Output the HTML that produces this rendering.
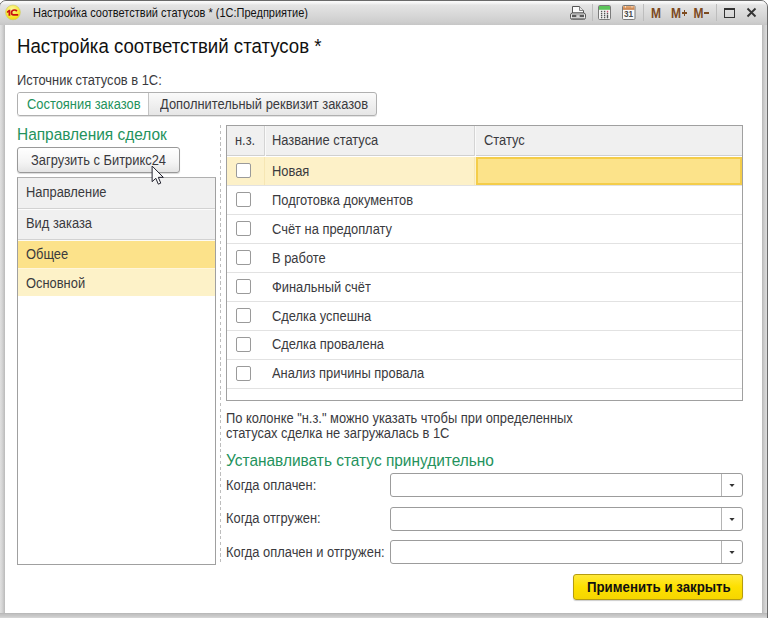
<!DOCTYPE html>
<html><head><meta charset="utf-8">
<style>
*{margin:0;padding:0;box-sizing:border-box}
html,body{width:768px;height:618px;overflow:hidden;background:#fff}
body{background:#fff;font-family:"Liberation Sans",sans-serif;color:#3a3a3e;position:relative}
.a{position:absolute;white-space:nowrap}
</style></head><body>
<div class="a" style="left:-1px;top:0px;width:769px;height:625px;border:1px solid #6a6a6a;border-radius:7px 7px 0 0;background:#d0d0d0;overflow:hidden;"></div>
<div class="a" style="left:0px;top:1px;width:767px;height:24px;background:linear-gradient(#fbfbfb 0,#f5f5f5 2px,#e4e4e4 4px,#dadada 12px,#cecece 21px,#c6c6c6 24px);border-radius:6px 6px 0 0;"></div>
<div class="a" style="left:0px;top:25px;width:5px;height:593px;background:linear-gradient(90deg,#e0e0e0 0,#d6d6d6 2px,#c8c8c8 3.5px,#bababa 5px);"></div>
<div class="a" style="left:762px;top:25px;width:5px;height:593px;background:linear-gradient(90deg,#b8b8b8 0,#c6c6c6 1.5px,#d2d2d2 3px,#dcdcdc 5px);"></div>
<div class="a" style="left:0px;top:613px;width:767px;height:5px;background:linear-gradient(#b5b5b5 0,#c2c2c2 1.5px,#c8c8c8 3px,#d8d8d8 5px);"></div>
<div class="a" style="left:5px;top:25px;width:757px;height:588px;background:#fff;"></div>
<svg class="a" style="left:3px;top:2px" width="22" height="22" viewBox="0 0 22 22">
  <defs><radialGradient id="g1" cx="0.45" cy="0.3" r="0.75"><stop offset="0" stop-color="#fbf8a8"/><stop offset="0.55" stop-color="#f8ea40"/><stop offset="1" stop-color="#f2d800"/></radialGradient></defs>
  <circle cx="9.95" cy="10.4" r="7.4" fill="url(#g1)" stroke="#c8c870" stroke-width="0.6"/>
  <path d="M3.9 9.4 L6.0 7.8 H7.3 V13.7 H5.5 V10.3 L3.9 11 Z" fill="#c81010"/>
  <path d="M13.9 9.1 C13.2 8.3 12.4 8.0 11.4 8.0 C9.5 8.0 8.5 9.3 8.5 10.8 C8.5 12.3 9.5 12.9 10.6 12.9 H15.2" fill="none" stroke="#c81010" stroke-width="1.7"/>
</svg>
<div class="a" style="left:33px;top:7px;font-size:11px;line-height:11px;transform:scaleY(1.08);transform-origin:0 0;color:#111;">Настройка соответствий статусов * (1С:Предприятие)</div>
<svg class="a" style="left:568px;top:4px" width="20" height="17" viewBox="0 0 20 17">
  <path d="M4.5 2.5 H11.5 L15.5 6.5 V9 H4.5 Z" fill="#fbfbfb" stroke="#555" stroke-width="1"/>
  <path d="M11.5 2.5 V6.5 H15.5" fill="#e4e4e4" stroke="#666" stroke-width="0.8"/>
  <rect x="2.5" y="9" width="15" height="6.5" rx="2" fill="#ececec" stroke="#555" stroke-width="1"/>
  <rect x="4" y="10.6" width="12" height="2.6" fill="#5a5a5a"/>
  <rect x="8.3" y="11.3" width="3.4" height="1.5" fill="#f4f4f4"/>
  <rect x="3.5" y="14" width="13" height="1.6" fill="#8a8a8a"/>
</svg>
<div class="a" style="left:592px;top:4px;width:1px;height:17px;background:#bdbdbd;"></div>
<svg class="a" style="left:597px;top:5px" width="15" height="15" viewBox="0 0 15 15">
  <rect x="1.5" y="0.5" width="12" height="14" rx="1.2" fill="#f6f6f6" stroke="#7a7a7a"/>
  <rect x="2" y="1" width="11" height="3.8" fill="#5cc45a"/>
  <g fill="#555">
    <rect x="3.9" y="5.8" width="1.4" height="1.4"/><rect x="6.9" y="5.8" width="1.4" height="1.4"/><rect x="9.8" y="5.8" width="1.4" height="1.6" fill="#d05070"/>
    <rect x="3.9" y="7.9" width="1.4" height="1.4"/><rect x="6.9" y="7.9" width="1.4" height="1.4"/><rect x="9.8" y="7.9" width="1.4" height="1.4"/>
    <rect x="3.9" y="9.9" width="1.4" height="1.4"/><rect x="6.9" y="9.9" width="1.4" height="1.4"/><rect x="9.8" y="9.9" width="1.4" height="3.4"/>
    <rect x="3.9" y="11.9" width="1.4" height="1.4"/><rect x="6.9" y="11.9" width="1.4" height="1.4"/>
  </g>
</svg>
<svg class="a" style="left:621px;top:5px" width="15" height="15" viewBox="0 0 15 15">
  <defs><linearGradient id="cg" x1="0" y1="0" x2="0" y2="1"><stop offset="0" stop-color="#e9ae78"/><stop offset="1" stop-color="#c47a45"/></linearGradient></defs>
  <rect x="1.5" y="0.5" width="12.5" height="14" rx="1.2" fill="#fafafa" stroke="#7a7a7a"/>
  <rect x="2" y="1" width="11.5" height="3.8" fill="url(#cg)"/>
  <rect x="4" y="1" width="1" height="1.6" fill="#f4e0d0"/><rect x="10.5" y="1" width="1" height="1.6" fill="#f4e0d0"/>
  <text x="7.6" y="12.2" text-anchor="middle" font-family="Liberation Sans" font-weight="bold" font-size="8.2" fill="#4a4a4a">31</text>
</svg>
<div class="a" style="left:643px;top:4px;width:1px;height:17px;background:#bdbdbd;"></div>
<div class="a" style="left:651px;top:6px;font-size:12px;line-height:12px;transform:scaleY(1.15);transform-origin:0 0;color:#7d4a1e;font-weight:bold;">M</div>
<div class="a" style="left:671px;top:6px;font-size:12px;line-height:12px;transform:scaleY(1.15);transform-origin:0 0;color:#7d4a1e;font-weight:bold;">M</div>
<div class="a" style="left:681.8px;top:12px;width:5.5px;height:1.6px;background:#7d4a1e;"></div>
<div class="a" style="left:683.8px;top:10px;width:1.6px;height:5.5px;background:#7d4a1e;"></div>
<div class="a" style="left:693.5px;top:6px;font-size:12px;line-height:12px;transform:scaleY(1.15);transform-origin:0 0;color:#7d4a1e;font-weight:bold;">M</div>
<div class="a" style="left:704.3px;top:12px;width:5px;height:1.7px;background:#7d4a1e;"></div>
<div class="a" style="left:716px;top:4px;width:1px;height:17px;background:#bdbdbd;"></div>
<div class="a" style="left:724px;top:8px;width:11px;height:10px;border:1.5px solid #333;border-top-width:2px;"></div>
<svg class="a" style="left:746px;top:7px" width="11" height="11" viewBox="0 0 11 11">
  <path d="M1.5 1.5 L9.5 9.5 M9.5 1.5 L1.5 9.5" stroke="#333" stroke-width="1.8"/>
</svg>
<div class="a" style="left:17px;top:37px;font-size:18.65px;line-height:18.65px;transform:scaleY(1.065);transform-origin:0 0;color:#111;">Настройка соответствий статусов *</div>
<div class="a" style="left:17px;top:74px;font-size:12.9px;line-height:12.9px;transform:scaleY(1.07);transform-origin:0 0;">Источник статусов в 1С:</div>
<div class="a" style="left:17px;top:92px;width:360px;height:24px;border:1px solid #b0b0b0;border-radius:3px;background:linear-gradient(#fafafa,#e6e6e6);box-shadow:0 1px 0 #e4e4e4;"></div>
<div class="a" style="left:18px;top:93px;width:130px;height:22px;background:#fff;border-radius:2px 0 0 2px;"></div>
<div class="a" style="left:148px;top:93px;width:1px;height:22px;background:#c4c4c4;"></div>
<div class="a" style="left:27px;top:98px;font-size:12.9px;line-height:12.9px;transform:scaleY(1.07);transform-origin:0 0;color:#23925c;">Состояния заказов</div>
<div class="a" style="left:160px;top:98px;font-size:12.9px;line-height:12.9px;transform:scaleY(1.07);transform-origin:0 0;">Дополнительный реквизит заказов</div>
<div class="a" style="left:17px;top:126px;font-size:15.45px;line-height:15.45px;transform:scaleY(1.09);transform-origin:0 0;color:#23925c;">Направления сделок</div>
<div class="a" style="left:17px;top:147px;width:163px;height:26px;border:1px solid #999;border-radius:3px;background:linear-gradient(#ffffff,#f4f4f4 60%,#e4e4e4);box-shadow:0 1px 1px rgba(0,0,0,0.15);"></div>
<div class="a" style="left:31px;top:154px;font-size:12.9px;line-height:12.9px;transform:scaleY(1.07);transform-origin:0 0;">Загрузить с Битрикс24</div>
<div class="a" style="left:17px;top:177px;width:199px;height:388px;border:1px solid #a0a0a0;border-top-color:#b0b0b0;background:#fff;"></div>
<div class="a" style="left:18px;top:178px;width:197px;height:30px;background:#f0f0f0;"></div>
<div class="a" style="left:18px;top:208px;width:197px;height:1px;background:#d2d2d2;"></div>
<div class="a" style="left:18px;top:209px;width:197px;height:1px;background:#fcfcfc;"></div>
<div class="a" style="left:18px;top:210px;width:197px;height:29px;background:#f0f0f0;"></div>
<div class="a" style="left:18px;top:239px;width:197px;height:1px;background:#d2d2d2;"></div>
<div class="a" style="left:18px;top:240px;width:197px;height:1px;background:#fdfbf4;"></div>
<div class="a" style="left:18px;top:241px;width:197px;height:27px;background:#fce28a;"></div>
<div class="a" style="left:18px;top:268px;width:197px;height:1px;background:#fff6dc;"></div>
<div class="a" style="left:18px;top:269px;width:197px;height:27px;background:#fdf2c8;"></div>
<div class="a" style="left:26px;top:186px;font-size:12.9px;line-height:12.9px;transform:scaleY(1.07);transform-origin:0 0;">Направление</div>
<div class="a" style="left:26px;top:217px;font-size:12.9px;line-height:12.9px;transform:scaleY(1.07);transform-origin:0 0;">Вид заказа</div>
<div class="a" style="left:26px;top:248px;font-size:12.9px;line-height:12.9px;transform:scaleY(1.07);transform-origin:0 0;">Общее</div>
<div class="a" style="left:26px;top:277px;font-size:12.9px;line-height:12.9px;transform:scaleY(1.07);transform-origin:0 0;">Основной</div>
<div class="a" style="left:220px;top:125px;width:1px;height:439px;background:repeating-linear-gradient(#bdbdbd 0 3.2px,transparent 3.2px 5.79px);"></div>
<div class="a" style="left:226px;top:125px;width:517px;height:276px;border:1px solid #a0a0a0;background:#fff;"></div>
<div class="a" style="left:227px;top:126px;width:515px;height:30px;background:#f0f0f0;border-bottom:1px solid #d0d0d0;"></div>
<div class="a" style="left:264px;top:126px;width:1px;height:30px;background:#d4d4d4;"></div>
<div class="a" style="left:265px;top:126px;width:1px;height:30px;background:#fafafa;"></div>
<div class="a" style="left:474px;top:126px;width:1px;height:30px;background:#d4d4d4;"></div>
<div class="a" style="left:475px;top:126px;width:1px;height:30px;background:#fafafa;"></div>
<div class="a" style="left:235px;top:134px;font-size:12.9px;line-height:12.9px;transform:scaleY(1.07);transform-origin:0 0;">н.з.</div>
<div class="a" style="left:272px;top:134px;font-size:12.9px;line-height:12.9px;transform:scaleY(1.07);transform-origin:0 0;">Название статуса</div>
<div class="a" style="left:484px;top:134px;font-size:12.9px;line-height:12.9px;transform:scaleY(1.07);transform-origin:0 0;">Статус</div>
<div class="a" style="left:227px;top:157px;width:250px;height:28px;background:#fdf1c8;"></div>
<div class="a" style="left:264px;top:157px;width:1px;height:28px;background:#f6e6b4;"></div>
<div class="a" style="left:474px;top:157px;width:1px;height:28px;background:#f6e6b4;"></div>
<div class="a" style="left:476px;top:157px;width:266px;height:28px;background:#fce38a;border:2px solid #f4cd4a;"></div>
<div class="a" style="left:227px;top:185px;width:515px;height:1px;background:#e2e2e2;"></div>
<div class="a" style="left:236px;top:163px;width:15px;height:15px;border:1px solid #9a9a9a;border-radius:2px;background:#fff;"></div>
<div class="a" style="left:272px;top:165px;font-size:12.9px;line-height:12.9px;transform:scaleY(1.07);transform-origin:0 0;">Новая</div>
<div class="a" style="left:227px;top:214px;width:515px;height:1px;background:#e2e2e2;"></div>
<div class="a" style="left:236px;top:192px;width:15px;height:15px;border:1px solid #9a9a9a;border-radius:2px;background:#fff;"></div>
<div class="a" style="left:272px;top:194px;font-size:12.9px;line-height:12.9px;transform:scaleY(1.07);transform-origin:0 0;">Подготовка документов</div>
<div class="a" style="left:227px;top:243px;width:515px;height:1px;background:#e2e2e2;"></div>
<div class="a" style="left:236px;top:221px;width:15px;height:15px;border:1px solid #9a9a9a;border-radius:2px;background:#fff;"></div>
<div class="a" style="left:272px;top:223px;font-size:12.9px;line-height:12.9px;transform:scaleY(1.07);transform-origin:0 0;">Счёт на предоплату</div>
<div class="a" style="left:227px;top:272px;width:515px;height:1px;background:#e2e2e2;"></div>
<div class="a" style="left:236px;top:250px;width:15px;height:15px;border:1px solid #9a9a9a;border-radius:2px;background:#fff;"></div>
<div class="a" style="left:272px;top:252px;font-size:12.9px;line-height:12.9px;transform:scaleY(1.07);transform-origin:0 0;">В работе</div>
<div class="a" style="left:227px;top:301px;width:515px;height:1px;background:#e2e2e2;"></div>
<div class="a" style="left:236px;top:279px;width:15px;height:15px;border:1px solid #9a9a9a;border-radius:2px;background:#fff;"></div>
<div class="a" style="left:272px;top:281px;font-size:12.9px;line-height:12.9px;transform:scaleY(1.07);transform-origin:0 0;">Финальный счёт</div>
<div class="a" style="left:227px;top:330px;width:515px;height:1px;background:#e2e2e2;"></div>
<div class="a" style="left:236px;top:308px;width:15px;height:15px;border:1px solid #9a9a9a;border-radius:2px;background:#fff;"></div>
<div class="a" style="left:272px;top:310px;font-size:12.9px;line-height:12.9px;transform:scaleY(1.07);transform-origin:0 0;">Сделка успешна</div>
<div class="a" style="left:227px;top:359px;width:515px;height:1px;background:#e2e2e2;"></div>
<div class="a" style="left:236px;top:337px;width:15px;height:15px;border:1px solid #9a9a9a;border-radius:2px;background:#fff;"></div>
<div class="a" style="left:272px;top:338px;font-size:12.9px;line-height:12.9px;transform:scaleY(1.07);transform-origin:0 0;">Сделка провалена</div>
<div class="a" style="left:227px;top:388px;width:515px;height:1px;background:#e2e2e2;"></div>
<div class="a" style="left:236px;top:366px;width:15px;height:15px;border:1px solid #9a9a9a;border-radius:2px;background:#fff;"></div>
<div class="a" style="left:272px;top:367px;font-size:12.9px;line-height:12.9px;transform:scaleY(1.07);transform-origin:0 0;">Анализ причины провала</div>
<div class="a" style="left:226px;top:412px;font-size:12.9px;line-height:12.9px;transform:scaleY(1.07);transform-origin:0 0;">По колонке "н.з." можно указать чтобы при определенных</div>
<div class="a" style="left:226px;top:427px;font-size:12.9px;line-height:12.9px;transform:scaleY(1.07);transform-origin:0 0;">статусах сделка не загружалась в 1С</div>
<div class="a" style="left:226px;top:452px;font-size:15.45px;line-height:15.45px;transform:scaleY(1.09);transform-origin:0 0;color:#23925c;">Устанавливать статус принудительно</div>
<div class="a" style="left:226px;top:479px;font-size:12.9px;line-height:12.9px;transform:scaleY(1.07);transform-origin:0 0;">Когда оплачен:</div>
<div class="a" style="left:390px;top:473px;width:353px;height:24px;border:1px solid #9c9c9c;border-radius:3px;background:#fff;"></div>
<div class="a" style="left:721px;top:474px;width:1px;height:22px;background:#b4b4b4;"></div>
<svg class="a" style="left:729px;top:483px" width="6" height="5" viewBox="0 0 6 5"><path d="M0.4 1 H5.6 L3 3.9 Z" fill="#333"/></svg>
<div class="a" style="left:226px;top:512px;font-size:12.9px;line-height:12.9px;transform:scaleY(1.07);transform-origin:0 0;">Когда отгружен:</div>
<div class="a" style="left:390px;top:507px;width:353px;height:24px;border:1px solid #9c9c9c;border-radius:3px;background:#fff;"></div>
<div class="a" style="left:721px;top:508px;width:1px;height:22px;background:#b4b4b4;"></div>
<svg class="a" style="left:729px;top:517px" width="6" height="5" viewBox="0 0 6 5"><path d="M0.4 1 H5.6 L3 3.9 Z" fill="#333"/></svg>
<div class="a" style="left:226px;top:546px;font-size:12.9px;line-height:12.9px;transform:scaleY(1.07);transform-origin:0 0;">Когда оплачен и отгружен:</div>
<div class="a" style="left:390px;top:540px;width:353px;height:24px;border:1px solid #9c9c9c;border-radius:3px;background:#fff;"></div>
<div class="a" style="left:721px;top:541px;width:1px;height:22px;background:#b4b4b4;"></div>
<svg class="a" style="left:729px;top:550px" width="6" height="5" viewBox="0 0 6 5"><path d="M0.4 1 H5.6 L3 3.9 Z" fill="#333"/></svg>
<div class="a" style="left:573px;top:574px;width:170px;height:26px;border:1px solid #b59c10;border-radius:3px;background:linear-gradient(#ffe93a,#fde000 50%,#f6d600);box-shadow:0 1px 1px rgba(0,0,0,0.2);"></div>
<div class="a" style="left:587px;top:580px;font-size:13.25px;line-height:13.25px;transform:scaleY(1.1);transform-origin:0 0;color:#111;font-weight:bold;">Применить и закрыть</div>
<svg class="a" style="left:151.45px;top:165.45px" width="14.6" height="20.6" viewBox="0 0 14 20">
  <path d="M1 1 V16.2 L4.6 12.9 L7.0 18.6 L9.4 17.6 L7.0 12 H11.9 Z" fill="#fbfbfb" stroke="#1e1e2a" stroke-width="0.95" stroke-linejoin="round"/>
</svg>
</body></html>
